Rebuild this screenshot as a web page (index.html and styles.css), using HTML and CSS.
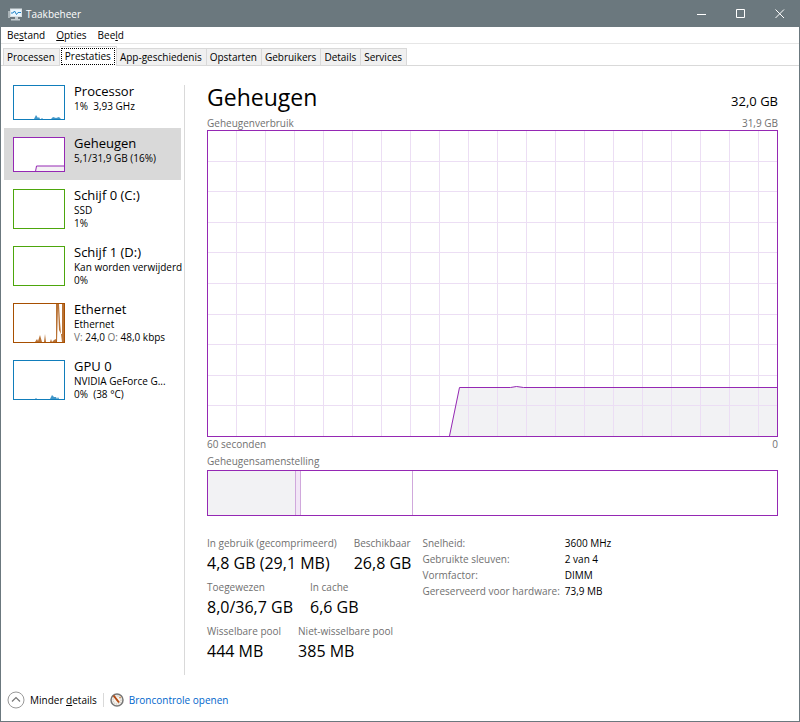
FILE: index.html
```html
<!DOCTYPE html>
<html lang="nl">
<head>
  <meta charset="UTF-8" />
  <meta name="viewport" content="width=device-width, initial-scale=1.0" />
  <title>Taakbeheer</title>
  <link rel="stylesheet" href="styles.css">
</head>
<body>
  <div class="window">
    <header class="titlebar">
      <svg class="app-icon" width="14" height="13" viewBox="0 0 14 13">
        <path d="M0 3h2v7H0z" fill="#aab4b8"/>
        <rect x="2" y="0.500" width="12" height="8.500" fill="#d9dfe2"/>
        <rect x="3" y="1.500" width="10" height="6.500" fill="#eaf6fd"/>
        <path d="M3 5h2l1.500-2 2 3.500 1.500-2h3" fill="none" stroke="#2686c8"/>
        <path d="M7 9h3v2h2v1.500H3V11h4z" fill="#c3cbcf"/>
      </svg>
      <span class="window-title">Taakbeheer</span>
      <button class="caption" aria-label="Minimaliseren">
        <svg width="10" height="10"><path d="M0 5.500h9"/></svg>
      </button>
      <button class="caption" aria-label="Maximaliseren">
        <svg width="10" height="10"><path d="M0.500 0.500h8v8h-8z"/></svg>
      </button>
      <button class="caption" aria-label="Sluiten">
        <svg width="10" height="10"><path d="M0.500 0.500l8.500 8.500M9 0.500L0.500 9"/></svg>
      </button>
    </header>

    <nav class="menu">
      <button>Be<u>s</u>tand</button>
      <button><u>O</u>pties</button>
      <button>Bee<u>l</u>d</button>
    </nav>

    <div class="tabs" role="tablist">
      <button role="tab">Processen</button>
      <button role="tab" class="active" aria-selected="true"><span>Prestaties</span></button>
      <button role="tab">App-geschiedenis</button>
      <button role="tab">Opstarten</button>
      <button role="tab">Gebruikers</button>
      <button role="tab">Details</button>
      <button role="tab">Services</button>
    </div>

    <div class="content">
      <aside class="sidebar">
        <button class="item">
          <svg class="thumb short blue" viewBox="0 0 52 35">
            <path class="fill" d="M21 34l2-4 2 3 1-1 1 2zM28 34l1-1 1 1zM38 34l2-2 3 1 3-1 2 2z"/>
            <rect x="0.500" y="0.500" width="51" height="34"/>
          </svg>
          <span class="info"><strong>Processor</strong><span>1%&nbsp; 3,93 GHz</span></span>
        </button>
        <button class="item selected">
          <svg class="thumb short purple" viewBox="0 0 52 35">
            <path class="area" d="M22.500 34.500l1-5.500h28v5.500z"/>
            <rect x="0.500" y="0.500" width="51" height="34"/>
          </svg>
          <span class="info"><strong>Geheugen</strong><span>5,1/31,9 GB (16%)</span></span>
        </button>
        <button class="item">
          <svg class="thumb green" viewBox="0 0 52 40"><rect x="0.500" y="0.500" width="51" height="39"/></svg>
          <span class="info"><strong>Schijf 0 (C:)</strong><span>SSD</span><span>1%</span></span>
        </button>
        <button class="item">
          <svg class="thumb green" viewBox="0 0 52 40"><rect x="0.500" y="0.500" width="51" height="39"/></svg>
          <span class="info"><strong>Schijf 1 (D:)</strong><span>Kan worden verwijderd</span><span>0%</span></span>
        </button>
        <button class="item">
          <svg class="thumb brown" viewBox="0 0 52 40">
            <path class="fill" d="M22 39l2-3 1 2 2-6 2 7zM31 39l1-8 1 8zM37 39l1-3 1 3 2-2 2-1 1 3z"/>
            <path class="fill" d="M43 39V1h3l1 18 1 12h1V1h2v38h-2l-1-8-2-4-1-22-1 34z"/>
            <rect x="0.500" y="0.500" width="51" height="39"/>
          </svg>
          <span class="info"><strong>Ethernet</strong><span>Ethernet</span><span><i>V:</i> 24,0 <i>O:</i> 48,0 kbps</span></span>
        </button>
        <button class="item">
          <svg class="thumb blue" viewBox="0 0 52 40">
            <path class="fill" d="M22 39l1-1 1 1zM37 39l2-4 2 2 2 0 1 2 1-2 1 2z"/>
            <rect x="0.500" y="0.500" width="51" height="39"/>
          </svg>
          <span class="info"><strong>GPU 0</strong><span>NVIDIA GeForce G...</span><span>0%&nbsp; (38 °C)</span></span>
        </button>
      </aside>

      <main class="detail">
        <div class="heading">
          <h1>Geheugen</h1>
          <span class="total">32,0 GB</span>
        </div>
        <div class="caption-row"><span>Geheugenverbruik</span><span>31,9 GB</span></div>
        <div class="chart">
          <svg viewBox="0 0 569 305" preserveAspectRatio="none">
            <path class="usage-fill" d="M241 305l10-49h54l4-1 6 1h254v49z"/>
            <path class="grid" d="M28.500 0v305M57.500 0v305M86.500 0v305M115.500 0v305M144.500 0v305M173.500 0v305M202.500 0v305M231.500 0v305M260.500 0v305M289.500 0v305M318.500 0v305M347.500 0v305M376.500 0v305M405.500 0v305M434.500 0v305M463.500 0v305M492.500 0v305M521.500 0v305M550.500 0v305"/>
            <path class="grid" d="M0 30.500h569M0 60.500h569M0 91.500h569M0 121.500h569M0 152.500h569M0 183.500h569M0 213.500h569M0 244.500h569M0 274.500h569"/>
            <path class="usage-line" d="M241.500 305l10-48.500h51l6-1 7 1h254"/>
          </svg>
        </div>
        <div class="caption-row"><span>60 seconden</span><span>0</span></div>
        <div class="caption-row comp-label"><span>Geheugensamenstelling</span></div>
        <div class="composition">
          <div class="in-use" style="width: 15.4%"></div>
          <div class="modified" style="width: 1%"></div>
          <div class="standby" style="width: 19.6%"></div>
        </div>

        <div class="stats">
          <div class="numbers">
            <dl>
              <div><dt>In gebruik (gecomprimeerd)</dt><dd>4,8 GB (29,1 MB)</dd></div>
              <div><dt>Beschikbaar</dt><dd>26,8 GB</dd></div>
            </dl>
            <dl>
              <div><dt>Toegewezen</dt><dd>8,0/36,7 GB</dd></div>
              <div><dt>In cache</dt><dd>6,6 GB</dd></div>
            </dl>
            <dl>
              <div><dt>Wisselbare pool</dt><dd>444 MB</dd></div>
              <div><dt>Niet-wisselbare pool</dt><dd>385 MB</dd></div>
            </dl>
          </div>
          <table class="hardware">
            <tr><th scope="row">Snelheid:</th><td>3600 MHz</td></tr>
            <tr><th scope="row">Gebruikte sleuven:</th><td>2 van 4</td></tr>
            <tr><th scope="row">Vormfactor:</th><td>DIMM</td></tr>
            <tr><th scope="row">Gereserveerd voor hardware:</th><td>73,9 MB</td></tr>
          </table>
        </div>
      </main>
    </div>

    <footer class="footer">
      <button class="less">
        <svg width="18" height="18" viewBox="0 0 18 18" fill="none">
          <circle cx="9" cy="9" r="8" stroke="#999"/>
          <path d="M5 10.500l4-4 4 4" stroke="#777" stroke-width="1.200"/>
        </svg>
        <span>Minder <u>d</u>etails</span>
      </button>
      <a class="monitor" href="#">
        <svg width="14" height="14" viewBox="0 0 14 14" fill="none">
          <circle cx="7" cy="7" r="6" fill="#f6f3ee" stroke="#777" stroke-width="1.500"/>
          <circle cx="7" cy="7" r="4" stroke="#b9b2a8" stroke-dasharray="1 1"/>
          <path d="M3.500 2.500l5.500 7" stroke="#b5480f" stroke-width="2"/>
          <path d="M9 5l2-1" stroke="#d8843c"/>
        </svg>
        <span>Broncontrole openen</span>
      </a>
    </footer>
  </div>
</body>
</html>
```
FILE: styles.css
```css
* {
  box-sizing: border-box;
}

body {
  margin: 0;
  font-family: 'Open Sans', 'Noto Sans', sans-serif;
  font-size: 10px;
  line-height: 14px;
  color: #000;
  background: #fff;
}

button {
  font: inherit;
  color: inherit;
  background: none;
  border: 0;
  padding: 0;
  white-space: nowrap;
}

.window {
  display: flex;
  flex-direction: column;
  min-height: 100vh;
  border: 1px solid #6b787e;
}

.titlebar {
  display: flex;
  align-items: center;
  height: 26px;
  padding-left: 7px;
  background: #6b787e;
  color: #fff;
}

.window-title {
  flex: 1;
  margin-left: 4px;
}

.caption {
  display: flex;
  justify-content: center;
  align-items: center;
  width: 39px;
  height: 26px;
}

.caption svg {
  fill: none;
  stroke: #fff;
}

.menu {
  display: flex;
  gap: 11px;
  height: 17px;
  padding: 0 6px;
  border-bottom: 1px solid #e6e6e6;
}

.tabs {
  display: flex;
  align-items: flex-end;
  height: 22px;
  padding-left: 2px;
  border-bottom: 1px solid #d9d9d9;
}

.tabs button {
  height: 17px;
  padding: 0 4px 0 3px;
  background: #f0f0f0;
  border: 1px solid #d9d9d9;
  border-width: 1px 1px 0 0;
}

.tabs button:first-child {
  border-left-width: 1px;
}

.tabs .active {
  height: 20px;
  margin-bottom: -1px;
  padding: 1px;
  background: #fff;
}

.active span {
  display: block;
  height: 17px;
  padding: 0 3px;
  border: 1px dotted #000;
}

.content {
  display: flex;
  flex: 1;
  padding: 19px 21px 0 3px;
}

.sidebar {
  flex: none;
  width: 181px;
  padding-right: 3px;
  border-right: 1px solid #d9d9d9;
}

.item {
  display: flex;
  gap: 9px;
  width: 177px;
  padding: 9px 0 8px 9px;
  text-align: left;
}

.item:first-child {
  padding-top: 0;
}

.selected {
  background: #d9d9d9;
}

.thumb {
  flex: none;
  width: 52px;
  height: 40px;
  fill: #fff;
}

.short {
  height: 35px;
}

.thumb rect {
  fill: none;
  stroke: currentColor;
}

.thumb .fill {
  fill: currentColor;
  fill-opacity: 0.8;
}

.thumb .area {
  fill: #f4f2f4;
  stroke: currentColor;
}

.blue {
  color: #117dbb;
}

.purple {
  color: #9528b4;
  background: #fff;
}

.green {
  color: #4da60c;
}

.brown {
  color: #a74f01;
}

.info {
  display: flex;
  flex-direction: column;
  margin: -2px 0 -1px;
  line-height: 13px;
}

.info strong {
  font-size: 13px;
  font-weight: normal;
  line-height: 17px;
}

.info i {
  font-style: normal;
  color: #707070;
}

.detail {
  flex: 1;
  min-width: 0;
  padding-left: 22px;
}

.heading {
  display: flex;
  justify-content: space-between;
  align-items: baseline;
  padding-bottom: 7px;
}

h1 {
  margin: 0;
  font-size: 23px;
  font-weight: normal;
  line-height: 24px;
}

.total {
  font-size: 13px;
}

.caption-row {
  display: flex;
  justify-content: space-between;
  color: #707070;
}

.chart {
  height: 307px;
  border: 1px solid #9528b4;
}

.chart svg {
  display: block;
  width: 100%;
  height: 100%;
}

.grid {
  fill: none;
  stroke: #ecdef4;
}

.usage-fill {
  fill: #f2f2f4;
}

.usage-line {
  fill: none;
  stroke: #9528b4;
}

.comp-label {
  margin-top: 3px;
}

.composition {
  display: flex;
  height: 46px;
  margin-top: 2px;
  border: 1px solid #9528b4;
}

.composition div {
  border-right: 1px solid #d0a8dc;
}

.in-use {
  background: #f2f2f4;
}

.modified {
  background: #f2e6f6;
}

.stats {
  display: flex;
  gap: 11px;
  margin-top: 19px;
}

.numbers {
  display: flex;
  flex-direction: column;
  gap: 4px;
}

dl {
  display: flex;
  gap: 17px;
  margin: 0;
  white-space: nowrap;
}

dt {
  line-height: 16px;
  color: #707070;
}

dd {
  margin: 0;
  font-size: 16px;
  line-height: 24px;
}

.hardware {
  align-self: flex-start;
  border-collapse: collapse;
  line-height: 16px;
  white-space: nowrap;
}

.hardware th {
  padding: 0 5px 0 0;
  font-weight: normal;
  text-align: left;
  color: #707070;
}

.hardware td {
  padding: 0;
}

.footer {
  display: flex;
  align-items: center;
  height: 46px;
  padding: 4px 6px 0;
}

.less,
.monitor {
  display: flex;
  align-items: center;
  gap: 5px;
}

.monitor {
  margin-left: 6px;
  padding-left: 6px;
  border-left: 1px solid #d9d9d9;
  color: #0066cc;
  text-decoration: none;
}
```
